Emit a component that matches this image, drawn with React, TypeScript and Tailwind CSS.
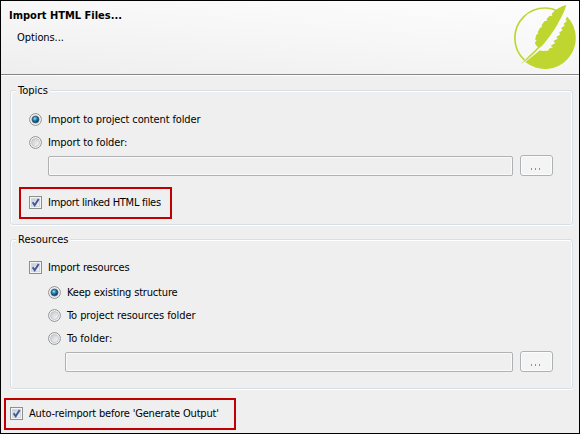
import type { ReactNode } from "react";

function Radio({ on = false }: { on?: boolean }) {
  return (
    <svg className="block size-[13px] shrink-0" viewBox="0 0 13 13">
      <defs>
        <linearGradient id="radioFace" x1="0" y1="0" x2="1" y2="1">
          <stop offset="0" stopColor="#c4c8cc" />
          <stop offset="1" stopColor="#fafafa" />
        </linearGradient>
        <radialGradient id="radioDot" cx="0.4" cy="0.35" r="0.65">
          <stop offset="0" stopColor="#9fe3fa" />
          <stop offset="0.45" stopColor="#2388b8" />
          <stop offset="1" stopColor="#0b2f50" />
        </radialGradient>
      </defs>
      <circle cx="6.5" cy="6.5" r="5.9" fill="#f7f7f7" stroke="#8e8f8f" strokeWidth="1" />
      <circle cx="6.5" cy="6.5" r="4" fill="url(#radioFace)" stroke="#b9bdc1" strokeWidth="0.8" />
      {on && <circle cx="6.5" cy="6.5" r="3.3" fill="url(#radioDot)" stroke="#123d5c" strokeWidth="0.6" />}
    </svg>
  );
}

function Check() {
  return (
    <svg className="block size-[13px] shrink-0" viewBox="0 0 13 13">
      <defs>
        <linearGradient id="checkFace" x1="0" y1="0" x2="1" y2="1">
          <stop offset="0" stopColor="#c3cad2" />
          <stop offset="1" stopColor="#f5f6f7" />
        </linearGradient>
      </defs>
      <rect x="0.5" y="0.5" width="12" height="12" fill="#f4f4f4" stroke="#8e8f8f" />
      <rect x="2.5" y="2.5" width="8" height="8" fill="url(#checkFace)" stroke="#d3d8dc" />
      <path d="M3.6 6.2 L5.7 9.3 L9.7 2.9" fill="none" stroke="#40599b" strokeWidth="1.9" />
    </svg>
  );
}

function Option({ icon, children, text = "" }: { icon: ReactNode; children: ReactNode; text?: string }) {
  return (
    <div className="flex h-[13px] items-center gap-[6px]">
      {icon}
      <span className={`whitespace-nowrap leading-[13px] ${text}`}>{children}</span>
    </div>
  );
}

function PathRow() {
  return (
    <div className="flex h-[21px] items-end gap-[7px]">
      <div className="h-5 flex-1 rounded-[2px] border border-[#afb1b3] bg-[#efefef] shadow-[inset_0_0_0_1px_#fafafa]" />
      <button className="flex h-[21px] w-[33px] items-center justify-center rounded-[3px] border border-[#adb2b5] bg-[#f4f4f4] shadow-[inset_0_0_0_1px_#fcfcfc]">
        <span className="flex gap-[3px] pt-[6px] pr-[2px]">
          <i className="h-[2px] w-px bg-[#8d9298]" />
          <i className="h-[2px] w-px bg-[#8d9298]" />
          <i className="h-[2px] w-px bg-[#8d9298]" />
        </span>
      </button>
    </div>
  );
}

function Group({ title, className, children }: { title: ReactNode; className: string; children: ReactNode }) {
  return (
    <section
      className={`rounded-[3px] border border-[#d5dfe5] shadow-[inset_1px_1px_0_#fff,inset_-1px_0_0_#fff,0_1px_0_#fff] ${className}`}
    >
      <div className="-mt-[7px] ml-[5px] flex h-[14px] w-fit items-center bg-[#efefef] pr-[2px] pl-[2px] leading-[14px]">
        {title}
      </div>
      {children}
    </section>
  );
}

function Logo() {
  return (
    <svg className="block h-[70px] w-[68px]" viewBox="0 0 204 210">
      {/* ring, left open where the feather crosses it */}
      <circle
        cx="104.5"
        cy="108"
        r="90"
        fill="none"
        stroke="#bfd630"
        strokeWidth="5"
        pathLength="360"
        strokeDasharray="164 196"
        strokeDashoffset="-133"
      />
      <path
        d="M171.3 43.3 A93 93 0 0 1 46 180.3 L90 145 L96 147 L114 146 L119 139 L129 136 L122 131 L136 123 L130 117 L143 110 L139 105 L151 97 L147 92 L158 84 L153 79 L165 70 L160 66 L172 56 L166 55 Z"
        fill="#bfd630"
      />
      <path
        d="M169 9 C152 13 137 23 125 35 L127 42 L119 41 L110 51 L111 56 L103 58 L94 71 L97 75 L90 77 L83 91 L85 95 L80 97 C77 104 76 110 76 114 L80 116 L75 121 C75 127 78 131 84 135 C67 153 49 169 33 186 C55 173 70 156 87 139 C94 134 99 128 104 122 C124 98 139 75 151 51 C159 37 165 23 169 9 Z"
        fill="#bfd630"
      />
    </svg>
  );
}

export default function App() {
  return (
    <div className="flex h-[434px] w-[580px] flex-col border border-black bg-[#efefef] font-['DejaVu_Sans_Condensed','DejaVu_Sans',sans-serif] text-[11px] [font-stretch:condensed] text-black">
      <header className="flex h-[74px] shrink-0 justify-between border-b border-[#858585] bg-[linear-gradient(185deg,#fdfdfd_0%,#f7f7f7_45%,#eeeeee_100%)]">
        <div className="pl-[8px]">
          <h1 className="mt-[7px] h-[16px] font-bold leading-[16px] whitespace-nowrap">Import HTML Files...</h1>
          <p className="mt-[6px] ml-[8px] leading-[16px] tracking-[-0.08px]">Options...</p>
        </div>
        <div className="mt-px mr-px">
          <Logo />
        </div>
      </header>
      <main className="flex flex-col border-t border-white">
        <Group title="Topics" className="mt-[14px] mr-[6px] ml-[9px] h-[135px]">
          <div className="flex flex-col pt-[15px] pl-[18px]">
            <Option icon={<Radio on />} text="tracking-[-0.12px]">Import to project content folder</Option>
            <div className="mt-[10px]">
              <Option icon={<Radio />} text="tracking-[-0.1px]">Import to folder:</Option>
            </div>
            <div className="mt-[6px] mr-[19px] ml-[19px]">
              <PathRow />
            </div>
            <div className="mt-[11px] -ml-[10px] flex h-8 w-[153px] items-center border-2 border-[#c00000] pb-[2px] pl-[8px]">
              <Option icon={<Check />} text="tracking-[-0.28px]">Import linked HTML files</Option>
            </div>
          </div>
        </Group>
        <Group title="Resources" className="mt-[14px] mr-[6px] ml-[9px] h-[150px]">
          <div className="flex flex-col pt-[14px] pl-[18px]">
            <Option icon={<Check />} text="tracking-[-0.15px]">Import resources</Option>
            <div className="mt-[12px] mr-[19px] ml-[19px] flex flex-col gap-[10px]">
              <Option icon={<Radio on />} text="tracking-[-0.17px]">Keep existing structure</Option>
              <Option icon={<Radio />} text="tracking-[-0.08px]">To project resources folder</Option>
              <Option icon={<Radio />}>To folder:</Option>
            </div>
            <div className="mt-[6px] mr-[19px] ml-[36px]">
              <PathRow />
            </div>
          </div>
        </Group>
        <div className="mt-[9px] ml-[3px] flex h-8 w-[232px] items-center border-2 border-[#c00000] pb-px pl-[4px]">
          <Option icon={<Check />} text="tracking-[-0.18px]">Auto-reimport before 'Generate Output'</Option>
        </div>
      </main>
    </div>
  );
}
